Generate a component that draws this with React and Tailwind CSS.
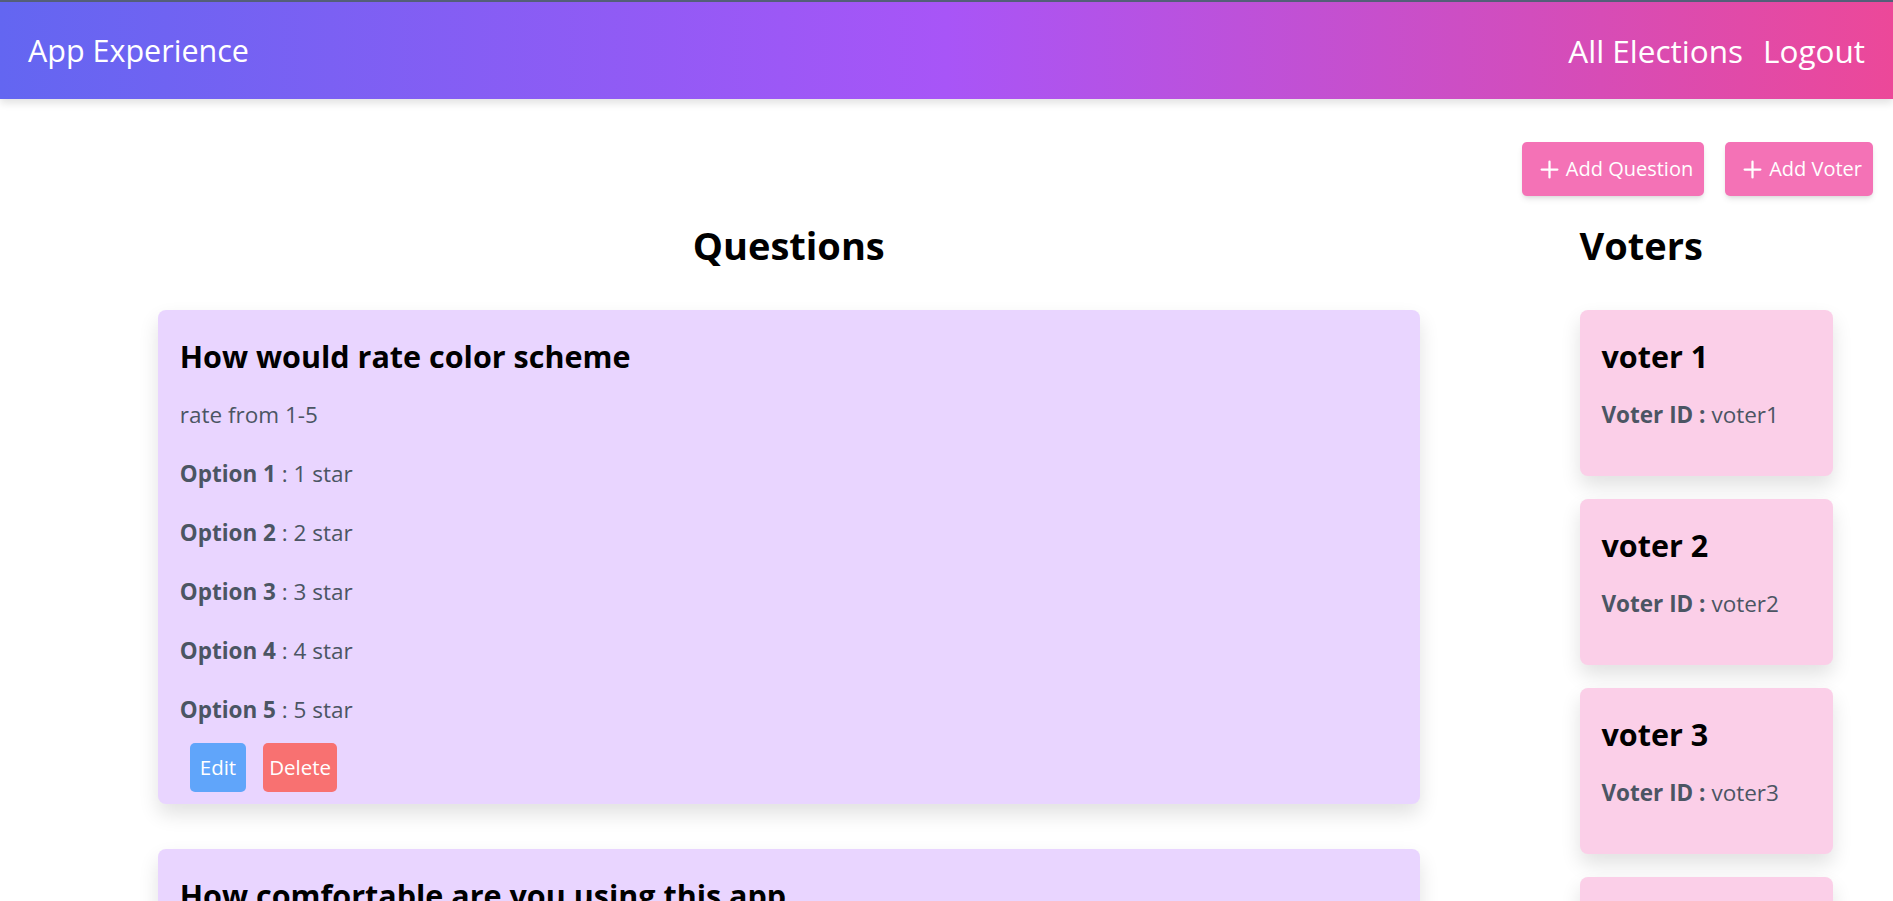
import { Plus } from 'lucide-react'

const questions = [
  {
    title: 'How would rate color scheme',
    desc: 'rate from 1-5',
    options: ['1 star', '2 star', '3 star', '4 star', '5 star'],
  },
  {
    title: 'How comfortable are you using this app',
    desc: 'rate from 1-5',
    options: ['1 star', '2 star', '3 star', '4 star', '5 star'],
  },
]

const voters = [
  { name: 'voter 1', id: 'voter1' },
  { name: 'voter 2', id: 'voter2' },
  { name: 'voter 3', id: 'voter3' },
  { name: 'voter 4', id: 'voter4' },
]

function QuestionCard({ q }) {
  return (
    <div className="w-4/5 mx-auto bg-[#e9d5ff] rounded-lg shadow-[0_10px_20px_rgba(0,0,0,0.12)] px-[22px] pt-[26px] pb-[12px] mb-[45px]">
      <h2 className="text-[30.5px] leading-[40px] font-bold text-black">{q.title}</h2>
      <p className="mt-[22px] text-[22.5px] leading-[34px] text-[#4b5563]">{q.desc}</p>
      {q.options.map((o, i) => (
        <p key={i} className="mt-[25px] text-[22.5px] leading-[34px] text-[#4b5563]">
          <span className="font-bold">Option {i + 1}</span> : {o}
        </p>
      ))}
      <div className="flex gap-[17px] mt-[16px] ml-[10px]">
        <button className="h-[49px] px-[10px] rounded-[5px] bg-[#60a5fa] text-white text-[20.5px]">Edit</button>
        <button className="h-[49px] px-[6px] rounded-[5px] bg-[#f87171] text-white text-[20.5px]">Delete</button>
      </div>
    </div>
  )
}

function VoterCard({ v }) {
  return (
    <div className="w-[253px] bg-[#fbcfe8] rounded-lg shadow-[0_10px_20px_rgba(0,0,0,0.12)] px-[22px] pt-[26px] pb-[44px] mb-[23px]">
      <h2 className="text-[30.5px] leading-[40px] font-bold text-black">{v.name}</h2>
      <p className="mt-[22px] text-[22.5px] leading-[34px] text-[#4b5563]">
        <span className="font-bold">Voter ID :</span> {v.id}
      </p>
    </div>
  )
}

export default function App() {
  return (
    <div className="min-h-screen bg-white font-['Segoe_UI','Open_Sans',sans-serif]">
      <div className="h-[2px] bg-[#55607a]" />
      <nav className="h-[97px] flex items-center justify-between px-[28px] bg-[linear-gradient(to_right,#6366f1,#a855f7,#ec4899)] shadow-[0_4px_8px_rgba(0,0,0,0.12)] text-white">
        <span className="text-[30.5px]">App Experience</span>
        <div className="flex items-center gap-[20px] text-[31.5px]">
          <a>All Elections</a>
          <a>Logout</a>
        </div>
      </nav>

      <div className="flex justify-end gap-[21px] pr-[20px] mt-[43px]">
        <button className="h-[54px] flex items-center gap-[3px] pl-[14px] pr-[11px] rounded-[5px] bg-[#f472b6] text-white text-[20px] shadow-md">
          <Plus className="w-[27px] h-[27px]" strokeWidth={2} />
          Add Question
        </button>
        <button className="h-[54px] flex items-center gap-[3px] pl-[14px] pr-[11px] rounded-[5px] bg-[#f472b6] text-white text-[20px] shadow-md">
          <Plus className="w-[27px] h-[27px]" strokeWidth={2} />
          Add Voter
        </button>
      </div>

      <div className="grid grid-cols-6 mt-[25px]">
        <div className="col-span-5">
          <h1 className="text-center text-[38px] leading-[48px] font-bold text-black mb-[41px]">Questions</h1>
          {questions.map((q, i) => (
            <QuestionCard key={i} q={q} />
          ))}
        </div>
        <div className="pl-[2px]">
          <h1 className="text-[38px] leading-[48px] font-bold text-black mb-[41px]">Voters</h1>
          {voters.map((v) => (
            <VoterCard key={v.id} v={v} />
          ))}
        </div>
      </div>
    </div>
  )
}
